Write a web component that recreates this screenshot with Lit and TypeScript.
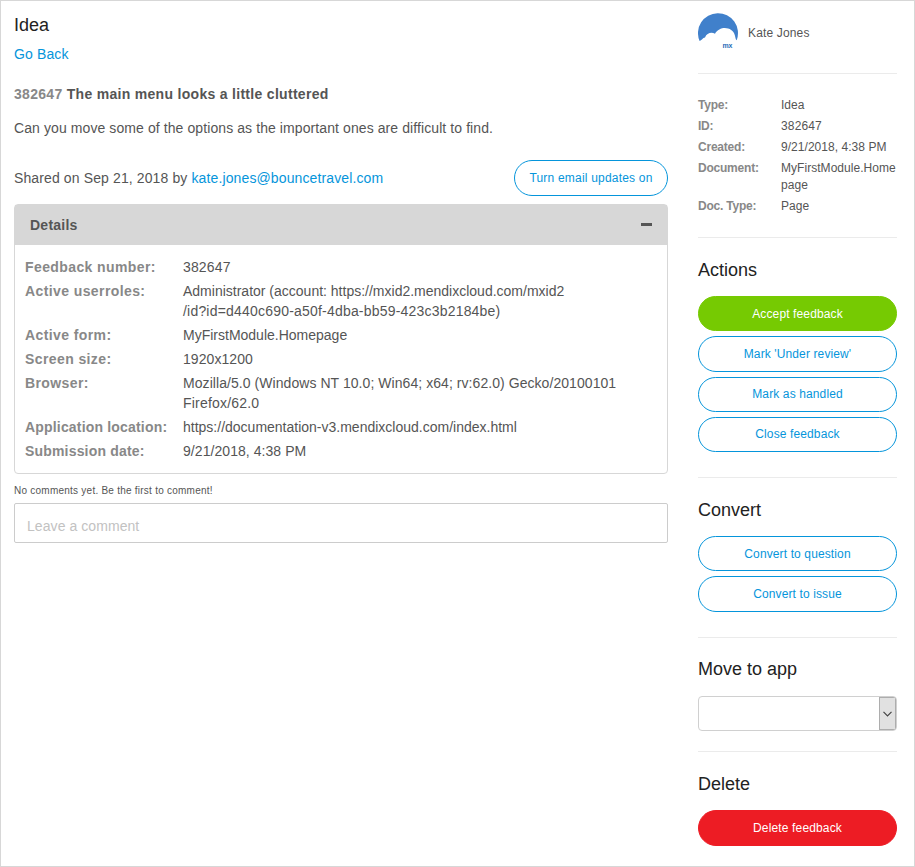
import { LitElement, html, css } from "lit";
import { customElement } from "lit/decorators.js";

type Row = { label: string; lines: string[]; kind?: string };

const DETAILS: Row[] = [
  { label: "Feedback number:", lines: ["382647"], kind: "wide" },
  { label: "Active userroles:", lines: ["Administrator (account: https://mxid2.mendixcloud.com/mxid2", "/id?id=d440c690-a50f-4dba-bb59-423c3b2184be)"] },
  { label: "Active form:", lines: ["MyFirstModule.Homepage"] },
  { label: "Screen size:", lines: ["1920x1200"], kind: "medium" },
  { label: "Browser:", lines: ["Mozilla/5.0 (Windows NT 10.0; Win64; x64; rv:62.0) Gecko/20100101", "Firefox/62.0"], kind: "medium" },
  { label: "Application location:", lines: ["https://documentation-v3.mendixcloud.com/index.html"], kind: "compact" },
  { label: "Submission date:", lines: ["9/21/2018, 4:38 PM"], kind: "compact medium" },
];

const META: Row[] = [
  { label: "Type:", lines: ["Idea"] },
  { label: "ID:", lines: ["382647"], kind: "wide" },
  { label: "Created:", lines: ["9/21/2018, 4:38 PM"] },
  { label: "Document:", lines: ["MyFirstModule.Home", "page"] },
  { label: "Doc. Type:", lines: ["Page"] },
];

@customElement("app-root")
export class AppRoot extends LitElement {
  static styles = css`
    :host { display: block; }
    * { box-sizing: border-box; }
    .page {
      display: grid; grid-template-columns: 654px 199px; column-gap: 30px;
      height: 867px; padding: 0 0 0 13px; overflow: hidden;
      border: 1px solid #d7d7d7; background: #fff; color: #555;
      font: 14px/20px "Liberation Sans", Arial, sans-serif; letter-spacing: 0.12px;
      white-space: nowrap;
    }
    h1, h2, p { margin: 0; font-weight: 400; }
    h1, h2 { font-size: 18px; line-height: 24px; color: #222; letter-spacing: 0; }
    h1 { margin-top: 12px; }
    a { color: #0595db; text-decoration: none; }
    .back { margin-top: 7px; }
    .title { margin-top: 20px; font-weight: 700; letter-spacing: 0.3px; }
    .title span { color: #888; }
    .body { margin-top: 14px; letter-spacing: 0.09px; }
    .shared { display: flex; justify-content: space-between; align-items: center; height: 36px; margin-top: 22px; }
    button {
      display: block; width: 199px; height: 35.3px; margin: 0 0 5px; padding: 0.4px 0 0;
      border: 1px solid #0595db; border-radius: 18px; background: #fff; color: #0595db;
      font: 12px/17px "Liberation Sans", Arial, sans-serif; letter-spacing: 0.12px;
    }
    h2 + button { padding-top: 1.6px; }
    .mail { width: 154px; height: 36px; margin: 0; letter-spacing: 0.2px; }
    .accept { background: #76ca02; border-color: #76ca02; color: #fff; }
    .delete { height: 36px; background: #ed1c24; border-color: #ed1c24; color: #fff; letter-spacing: 0.15px; }
    h2 + .delete { padding-top: 0.4px; }
    .panel { margin-top: 8px; height: 270px; border: 1px solid #d7d7d7; border-radius: 4px; }
    .head { display: flex; justify-content: space-between; align-items: center; height: 40px; padding: 0 15px; background: #d7d7d7; font-weight: 700; letter-spacing: 0.25px; }
    .minus { width: 11px; height: 3px; margin-bottom: 1px; background: #555; }
    .rows { padding: 12px 10px; display: grid; row-gap: 4px; letter-spacing: 0; }
    .rows .value div + div { letter-spacing: 0.2px; }
    .medium .value { letter-spacing: 0.06px; }
    .wide .value { letter-spacing: 0.15px; }
    .row { display: grid; grid-template-columns: 158px 1fr; }
    .label { font-weight: 700; color: #888; letter-spacing: 0.4px; }
    .compact .label { letter-spacing: 0.18px; }
    .none { margin-top: 10px; font-size: 10px; line-height: 14px; letter-spacing: 0.24px; }
    .comment { display: block; width: 654px; height: 40px; margin-top: 5px; padding: 6px 12px 0; border: 1px solid #ccc; border-radius: 2px; font: inherit; letter-spacing: 0.07px; }
    .comment::placeholder { color: #c2c2c2; opacity: 1; }
    .user { display: flex; align-items: center; gap: 10px; height: 72px; padding: 12px 0 20px; font-size: 12px; letter-spacing: 0.15px; }
    .user svg { display: block; }
    .rule { height: 1px; background: #ebebeb; }
    .meta { height: 163px; padding-top: 23px; display: grid; align-content: start; row-gap: 4px; font-size: 12px; line-height: 17px; letter-spacing: 0.04px; }
    .meta .row { grid-template-columns: 83px 1fr; }
    .meta .label { letter-spacing: -0.22px; }
    section { padding-top: 20px; height: 239px; }
    section h2 { margin-bottom: 14px; }
    .convert { height: 159px; }
    .move { height: 113px; padding-top: 19px; }
    .move h2 { margin-bottom: 15px; }
    .select { display: flex; justify-content: flex-end; width: 199px; height: 35px; border: 1px solid #d0d0d0; border-radius: 4px; overflow: hidden; }
    .arrow { display: flex; align-items: center; justify-content: center; width: 17px; height: 33px; padding-right: 1px; background: #e1e1e1; border: 1px solid #adadad; }
    .arrow svg { flex: none; }
  `;

  private rows(list: Row[]) {
    return list.map(({ label, lines, kind = "" }) => html`<div class="row ${kind}">
      <div class="label">${label}</div>
      <div class="value">${lines.map((line) => html`<div>${line}</div>`)}</div>
    </div>`);
  }

  render() {
    return html`<div class="page">
      <main>
        <h1>Idea</h1>
        <p class="back"><a>Go Back</a></p>
        <p class="title"><span>382647</span> The main menu looks a little cluttered</p>
        <p class="body">Can you move some of the options as the important ones are difficult to find.</p>
        <div class="shared">
          <p>Shared on Sep 21, 2018 by <a>kate.jones@bouncetravel.com</a></p>
          <button class="mail">Turn email updates on</button>
        </div>
        <div class="panel">
          <div class="head"><span>Details</span><span class="minus"></span></div>
          <div class="rows">${this.rows(DETAILS)}</div>
        </div>
        <p class="none">No comments yet. Be the first to comment!</p>
        <input class="comment" placeholder="Leave a comment" />
      </main>
      <aside>
        <div class="user">
          <svg width="40" height="40" viewBox="0 0 40 40">
            <path fill="#4080cb" d="M1.600 28A20 20 0 1 1 38.700 27.200C37.800 27.200 37.500 25 36.900 22.500C35 14 22 12 17 20.800C13.500 18.800 8.800 20 7 24.500C4.500 24.800 4.500 27 1.600 28Z"/>
            <text x="24.500" y="35" font-family="Liberation Sans, sans-serif" font-size="7" font-weight="700" letter-spacing="-.3" fill="#2b6cb8">mx</text>
          </svg>
          <span>Kate Jones</span>
        </div>
        <div class="rule"></div>
        <div class="meta">${this.rows(META)}</div>
        <div class="rule"></div>
        <section>
          <h2>Actions</h2>
          <button class="accept">Accept feedback</button>
          <button>Mark 'Under review'</button>
          <button>Mark as handled</button>
          <button>Close feedback</button>
        </section>
        <div class="rule"></div>
        <section class="convert">
          <h2>Convert</h2>
          <button>Convert to question</button>
          <button>Convert to issue</button>
        </section>
        <div class="rule"></div>
        <section class="move">
          <h2>Move to app</h2>
          <div class="select"><span class="arrow"><svg width="9" height="6" viewBox="0 0 9 6"><path d="M.5 .8L4.500 4.800L8.500 .8" fill="none" stroke="#444" stroke-width="1.200"/></svg></span></div>
        </section>
        <div class="rule"></div>
        <section>
          <h2>Delete</h2>
          <button class="delete">Delete feedback</button>
        </section>
      </aside>
    </div>`;
  }
}
